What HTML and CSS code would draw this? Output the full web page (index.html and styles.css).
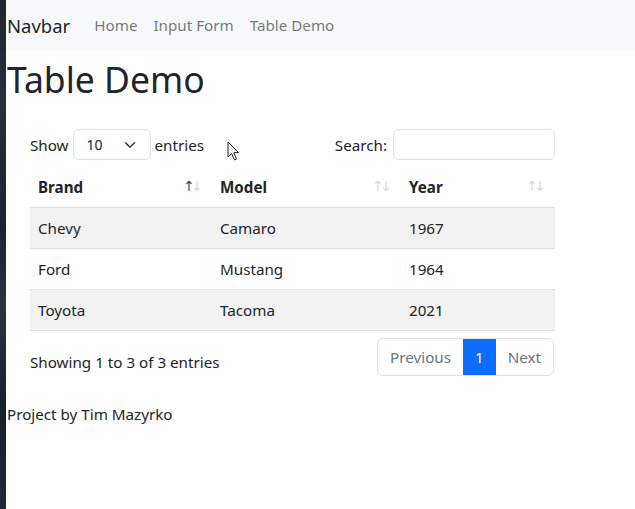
FILE: index.html
```html
<!DOCTYPE html>
<html lang="en">
<head>
<meta charset="utf-8">
<title>Table Demo</title>
<link rel="stylesheet" href="styles.css">
</head>
<body>
<div class="desk"></div>
<div class="page">
  <nav class="navbar">
    <a class="brand" href="#">Navbar</a>
    <a class="nav-link" href="#">Home</a>
    <a class="nav-link" href="#">Input Form</a>
    <a class="nav-link" href="#">Table Demo</a>
  </nav>
  <h1 class="title">Table Demo</h1>
  <div class="dt-wrapper">
    <div class="dt-top">
      <label class="dt-length">Show
        <span class="select"><span class="select-val">10</span>
          <svg class="chev" width="16" height="16" viewBox="0 0 16 16"><path d="M2 5l6 6 6-6" fill="none" stroke="#343a40" stroke-width="2" stroke-linecap="round" stroke-linejoin="round"/></svg>
        </span>
        entries</label>
      <label class="dt-search">Search: <span class="search-input"></span></label>
    </div>
    <table class="dt">
      <thead>
        <tr>
          <th class="c1 sort asc">Brand</th>
          <th class="c2 sort">Model</th>
          <th class="c3 sort">Year</th>
        </tr>
      </thead>
      <tbody>
        <tr class="odd"><td>Chevy</td><td>Camaro</td><td>1967</td></tr>
        <tr><td>Ford</td><td>Mustang</td><td>1964</td></tr>
        <tr class="odd"><td>Toyota</td><td>Tacoma</td><td>2021</td></tr>
      </tbody>
    </table>
    <div class="dt-bottom">
      <div class="dt-info">Showing 1 to 3 of 3 entries</div>
      <ul class="pagination">
        <li class="page-item disabled">Previous</li>
        <li class="page-item active">1</li>
        <li class="page-item disabled">Next</li>
      </ul>
    </div>
  </div>
  <p class="footer">Project by Tim Mazyrko</p>
  <svg class="cursor" width="14" height="22" viewBox="0 0 14 22"><path d="M1 1 L1 16 L4.5 12.5 L7.5 19 L9.5 18 L6.8 11.8 L11.5 11.5 Z" fill="#fff" stroke="#1a1a1a" stroke-width="1" stroke-linejoin="round"/></svg>
</div>
</body>
</html>
```
FILE: styles.css
```css
* { box-sizing: border-box; }
html, body { margin: 0; padding: 0; }
body {
  display: flex;
  height: 509px;
  overflow: hidden;
  font-family: "Noto Sans", "Open Sans", sans-serif;
  font-size: 15.2px;
  color: #212529;
  background: #fff;
}
.desk {
  width: 6px;
  flex: none;
  background: linear-gradient(180deg, #1d2733 0%, #25303c 20%, #1a232e 45%, #2a3440 60%, #18212b 80%, #1f2833 100%);
}
.page {
  flex: 1;
  position: relative;
  background: #fff;
}
.navbar {
  height: 51px;
  background: #f8f9fa;
  display: flex;
  align-items: center;
  padding-left: 1px;
  padding-bottom: 1px;
}
.brand {
  font-size: 18.5px;
  color: #212529;
  text-decoration: none;
  margin-right: 16px;
}
.nav-link {
  color: rgba(0,0,0,.55);
  text-decoration: none;
  padding: 0 8px;
}
.title {
  margin: 0 0 0 1px;
  font-size: 35.5px;
  font-weight: 400;
  line-height: 56px;
}
.dt-wrapper {
  width: 525px;
  margin: 22px 0 0 24px;
}
.dt-top {
  display: flex;
  justify-content: space-between;
  align-items: center;
  height: 31px;
}
.dt-length, .dt-search {
  display: flex;
  align-items: center;
}
.select {
  display: inline-flex;
  align-items: center;
  justify-content: space-between;
  width: 78px;
  height: 31px;
  margin: 0 4px 0 4px;
  padding: 0 14px 0 13px;
  border: 1px solid #dee2e6;
  border-radius: 6px;
  font-size: 14px;
}
.chev { width: 12px; height: 12px; }
.search-input {
  display: inline-block;
  width: 162px;
  height: 31px;
  margin-left: 6px;
  border: 1px solid #dee2e6;
  border-radius: 6px;
}
.dt {
  width: 100%;
  border-collapse: collapse;
  margin-top: 6px;
}
.dt th, .dt td {
  text-align: left;
  padding: 8px;
  height: 41px;
  border-bottom: 1px solid #dee2e6;
}
.dt th {
  font-weight: 700;
  position: relative;
  padding-right: 30px;
  padding-top: 9px;
  padding-bottom: 7px;
}
.c1 { width: 182px; }
.c2 { width: 189px; }
.c3 { width: 154px; }
.dt tr.odd td { background: #f2f2f2; }
.sort::before, .sort::after {
  position: absolute;
  top: 50%;
  transform: translateY(-50%);
  font-family: "DejaVu Sans", sans-serif;
  font-weight: 400;
  font-size: 14px;
  opacity: .15;
  color: #000;
}
.sort::before { content: "↑"; right: 17px; }
.sort::after { content: "↓"; right: 9px; }
.sort.asc::before { opacity: .85; color: #1a2530; }
.sort.asc::after { opacity: .25; color: #3d7aa8; }
.dt-bottom {
  display: flex;
  justify-content: space-between;
  align-items: flex-start;
  margin-top: 7px;
}
.dt-info { padding-top: 14px; }
.pagination {
  display: flex;
  list-style: none;
  margin: 0 1px 0 0;
  padding: 0;
  border: 1px solid #dee2e6;
  border-radius: 6px;
  overflow: hidden;
  height: 38px;
}
.page-item {
  display: flex;
  align-items: center;
  padding: 0 12px;
  color: #6c757d;
}
.page-item.active {
  background: #0d6efd;
  color: #fff;
}
.footer {
  margin: 26px 0 0 1px;
  line-height: 24px;
}
.cursor {
  position: absolute;
  left: 221px;
  top: 141px;
}
```
